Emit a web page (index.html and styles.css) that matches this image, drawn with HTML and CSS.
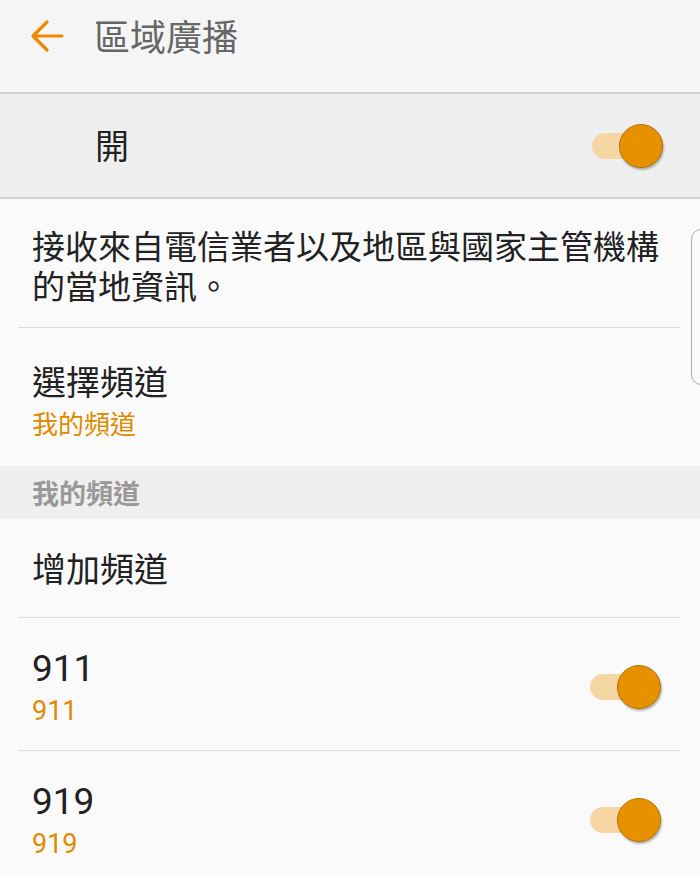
FILE: index.html
```html
<!DOCTYPE html>
<html lang="zh-Hant">
<head>
<meta charset="utf-8">
<title>區域廣播</title>
<link rel="stylesheet" href="styles.css">
</head>
<body>
<div class="screen">
  <header class="appbar">
    <svg class="back" width="34" height="34" viewBox="0 0 34 34" aria-hidden="true">
      <path d="M32 17 H4 M17 3 L3 17 L17 31" fill="none" stroke="#f08a00" stroke-width="3.2" stroke-linecap="round" stroke-linejoin="round"/>
    </svg>
    <h1 class="title">區域廣播</h1>
  </header>

  <div class="master">
    <span class="master-label">開</span>
    <span class="switch"><span class="track"></span><span class="knob"></span></span>
  </div>

  <div class="list">
    <div class="item desc">
      <p>接收來自電信業者以及地區與國家主管機構的當地資訊。</p>
    </div>
    <div class="item two-line pick">
      <div class="texts">
        <div class="primary">選擇頻道</div>
        <div class="secondary">我的頻道</div>
      </div>
    </div>
  </div>

  <div class="section">我的頻道</div>

  <div class="list">
    <div class="item single">
      <div class="primary">增加頻道</div>
    </div>
    <div class="item two-line channel">
      <div class="texts">
        <div class="primary num">911</div>
        <div class="secondary num">911</div>
      </div>
      <span class="switch"><span class="track"></span><span class="knob"></span></span>
    </div>
    <div class="item two-line channel last">
      <div class="texts">
        <div class="primary num">919</div>
        <div class="secondary num">919</div>
      </div>
      <span class="switch"><span class="track"></span><span class="knob"></span></span>
    </div>
  </div>

  <div class="scroll-edge"></div>
</div>
</body>
</html>
```

FILE: styles.css
```css
* { box-sizing: border-box; }
html, body { margin: 0; padding: 0; }
body {
  background: #fafafa;
  font-family: "Noto Sans CJK TC", "Noto Sans", sans-serif;
  color: #1f1f1f;
}
.screen {
  position: relative;
  width: 700px;
  height: 876px;
  overflow: hidden;
  background: #fafafa;
}
.appbar {
  height: 94px;
  background: #f5f5f5;
  border-bottom: 2px solid #d2d2d2;
  display: flex;
  align-items: center;
  padding-left: 30px;
  padding-bottom: 20px;
}
.back { flex: none; }
.title {
  margin: 0 0 0 30px;
  font-size: 36px;
  font-weight: 400;
  color: #666666;
  line-height: 1.2;
}
.master {
  height: 105px;
  background: #efefef;
  border-bottom: 2px solid #d2d2d2;
  display: flex;
  align-items: center;
  justify-content: space-between;
  padding: 0 35px 0 95px;
}
.master-label {
  font-size: 34px;
  line-height: 1.2;
  color: #222;
}
.switch {
  position: relative;
  width: 75px;
  height: 46px;
  flex: none;
}
.switch .track {
  position: absolute;
  left: 2px;
  top: 10px;
  width: 58px;
  height: 26px;
  border-radius: 13px;
  background: #f6d7a3;
}
.switch .knob {
  position: absolute;
  left: 29px;
  top: 1px;
  width: 44px;
  height: 44px;
  border-radius: 50%;
  background: #e89100;
  border: 1px solid #b87300;
  box-shadow: 1px 2px 2px rgba(0,0,0,0.28);
}
.list { padding: 0 20px 0 18px; }
.item {
  border-bottom: 1px solid #dedede;
  padding-left: 14px;
}
.item.last { border-bottom: none; }
.desc { padding-top: 26px; padding-bottom: 22px; }
.desc p {
  margin: 0;
  font-size: 33px;
  line-height: 40px;
  color: #222;
}
.primary {
  font-size: 34px;
  line-height: 40px;
  color: #222;
}
.secondary {
  font-size: 26px;
  line-height: 32px;
  color: #e08a00;
  margin-top: 6px;
}
.pick {
  border-bottom: none;
  padding-top: 33px;
  padding-bottom: 27px;
}
.section {
  height: 53px;
  background: #efefef;
  display: flex;
  align-items: center;
  padding-left: 32px;
  font-size: 27px;
  font-weight: 700;
  color: #999999;
}
.single {
  height: 99px;
  display: flex;
  align-items: center;
}
.channel {
  display: flex;
  align-items: center;
  justify-content: space-between;
  padding-top: 29px;
  padding-bottom: 23px;
  padding-right: 17px;
}
.num { font-family: "Roboto", "Noto Sans", sans-serif; }
.primary.num { font-size: 37px; line-height: 44px; }
.secondary.num { font-size: 27px; margin-top: 4px; }
.scroll-edge {
  position: absolute;
  left: 691px;
  top: 229px;
  width: 20px;
  height: 156px;
  border: 1.5px solid #b0b0b0;
  border-radius: 12px;
  background: transparent;
}
```
